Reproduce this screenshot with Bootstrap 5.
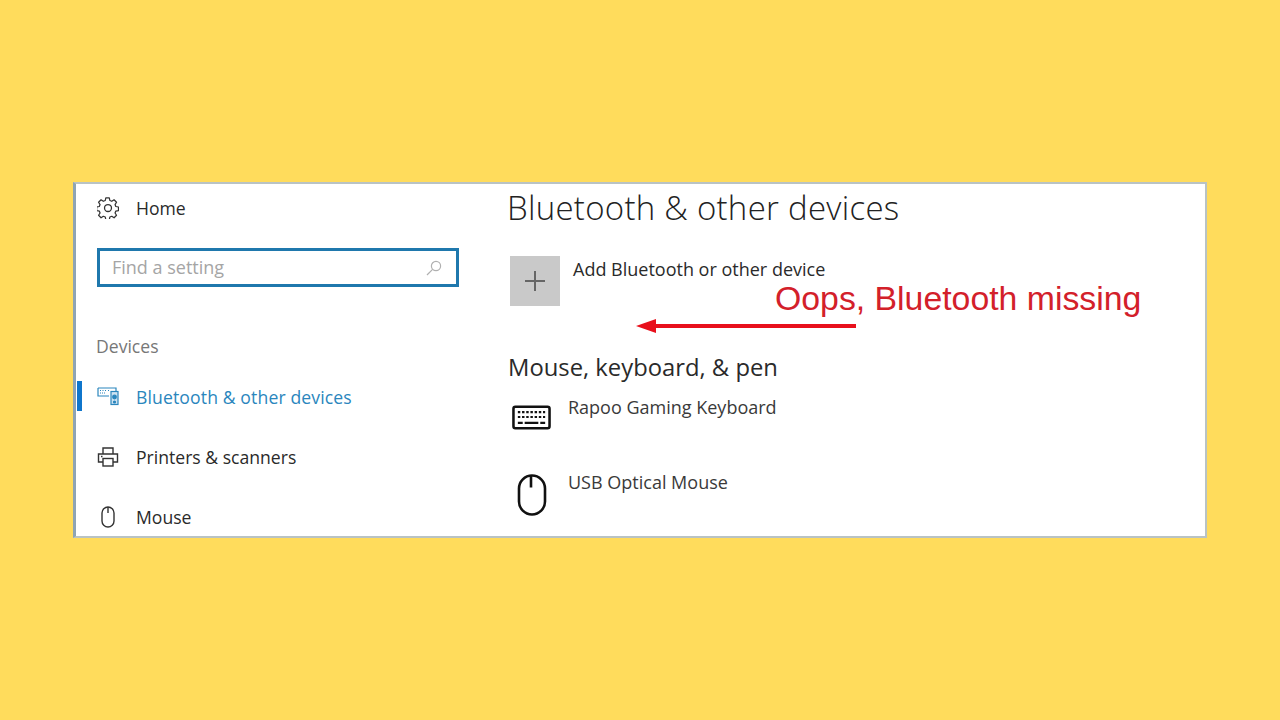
<!DOCTYPE html>
<html lang="en">
<head>
<meta charset="utf-8">
<title>Bluetooth & other devices</title>
<link href="https://cdn.jsdelivr.net/npm/bootstrap@5.3.0/dist/css/bootstrap.min.css" rel="stylesheet">
<style>
body{background:#ffdc5c;font-family:"Open Sans","Noto Sans",sans-serif;color:#222;margin:0}
.stage{height:720px}
.win{width:1134px;height:356px;background:#fff;border:2px solid #b9c3c4;border-left:3px solid #8ea4b4;overflow:hidden;position:relative}
.side{width:432px;flex:none;padding:0}
.home-row{height:48px;padding-left:21px;gap:17px;font-size:17.6px;color:#2a2a2a}
.ico{width:22px;height:22px;flex:none}
.search-box{margin:16px 0 0 21px;width:362px;height:39px;border:3px solid #1f78ad;padding:0 14px 0 12px;font-size:18px;color:#a5a5a5}
.dev-label{margin:46px 0 0 20px;font-size:17.6px;line-height:26px;color:#777}
.nav-rows{margin-top:8px}
.nav-line{height:60px;padding-left:21px;gap:17px;font-size:17.6px;color:#2a2a2a;position:relative}
.nav-line.on{color:#2a86bd;letter-spacing:.12px}
.nav-line.on::before{content:"";position:absolute;left:1px;top:14px;width:5px;height:30px;background:#0f76cc}
.nav-line.on .ico{margin-top:-3px}
.pg-title{font-size:33px;font-weight:300;line-height:44px;margin:2px 0 0 -1px;color:#222;letter-spacing:.27px}
.add-row{margin-top:26px;margin-left:2px;gap:13px}
.plus-tile{width:50px;height:50px;background:#c9c9c9;flex:none}
.add-text{font-size:18px;line-height:26px;color:#2a2a2a}
.sec-title{font-size:23.8px;line-height:32px;margin:45px 0 11px 0;color:#2a2a2a}
.dev-row{height:75px;gap:16px;margin-left:4px}
.dev-ico{width:40px;flex:none}
.kb-ico{margin-top:11px}
.ms-ico{margin-top:5px}
.dev-text{font-size:18px;line-height:26px;color:#3a3a3a}
.callout{position:absolute;left:699px;top:95px;font-family:"Liberation Sans",sans-serif;font-size:33.8px;line-height:38px;color:#d3202a;white-space:nowrap}
.pointer{position:absolute;left:560px;top:132px}
</style>
</head>
<body>
<div class="stage d-flex align-items-center justify-content-center">
  <div class="win d-flex">
    <div class="side">
      <div class="home-row d-flex align-items-center">
        <svg class="ico" viewBox="0 0 24 24" fill="none" stroke="#333" stroke-width="1.4" stroke-linejoin="round"><circle cx="12" cy="12" r="3.800"/><path d="M10 1.500h4l.6 3 2.200.9 2.600-1.700 2.800 2.800-1.700 2.600.9 2.200 3 .6v4l-3 .6-.9 2.200 1.700 2.600-2.800 2.800-2.600-1.700-2.200.9-.6 3h-4l-.6-3-2.200-.9-2.600 1.700-2.800-2.800 1.700-2.600-.9-2.200-3-.6v-4l3-.6.9-2.200-1.700-2.600 2.800-2.800 2.600 1.700 2.200-.9z" transform="translate(0 -.5) scale(.96)"/></svg>
        <span>Home</span>
      </div>
      <div class="search-box d-flex align-items-center justify-content-between">
        <span>Find a setting</span>
        <svg width="16" height="16" viewBox="0 0 16 16" fill="none" stroke="#b0b0b0" stroke-width="1.2"><circle cx="10" cy="6" r="4.600"/><path d="M6.600 9.400 1 15"/></svg>
      </div>
      <div class="dev-label">Devices</div>
      <div class="nav-rows">
        <div class="nav-line on d-flex align-items-center">
          <svg class="ico" viewBox="0 0 22 22" fill="none" stroke="#2a86bd" stroke-width="1.200"><path d="M1 3h18v4M1 3v8h11"/><path d="M3 5.500h1M5.500 5.500h1M8 5.500h1M11 5.500h1M3 8h6" stroke-dasharray="1 1"/><rect x="14" y="6.500" width="7" height="13" fill="#cfe3f1"/><circle cx="17.500" cy="12" r="1.800" fill="#2a86bd"/><circle cx="17.500" cy="17" r="1" fill="#2a86bd"/></svg>
          <span>Bluetooth &amp; other devices</span>
        </div>
        <div class="nav-line d-flex align-items-center">
          <svg class="ico" viewBox="0 0 22 22" fill="none" stroke="#333" stroke-width="1.400"><path d="M6 8V2h10v6"/><path d="M6 16H1.500V8h19v8H16"/><rect x="6" y="12.500" width="10" height="7.500"/><path d="M4 10.500h1.500"/></svg>
          <span>Printers &amp; scanners</span>
        </div>
        <div class="nav-line d-flex align-items-center">
          <svg class="ico" viewBox="0 0 22 22" fill="none" stroke="#333" stroke-width="1.400"><rect x="5" y="1" width="12" height="20" rx="6"/><path d="M11 1v6"/></svg>
          <span>Mouse</span>
        </div>
      </div>
    </div>
    <div class="flex-grow-1">
      <h1 class="pg-title">Bluetooth &amp; other devices</h1>
      <div class="add-row d-flex align-items-start">
        <div class="plus-tile d-flex align-items-center justify-content-center">
          <svg width="22" height="22" viewBox="0 0 22 22" stroke="#666" stroke-width="2"><path d="M11 1v20M1 11h20"/></svg>
        </div>
        <div class="add-text">Add Bluetooth or other device</div>
      </div>
      <h2 class="sec-title fw-normal">Mouse, keyboard, &amp; pen</h2>
      <div class="dev-row d-flex align-items-start">
        <div class="dev-ico">
          <svg class="d-block kb-ico" width="39" height="26" viewBox="0 0 40 26" fill="none"><rect x="1.500" y="1.500" width="37" height="22" rx="2" stroke="#111" stroke-width="2.600"/><path d="M6 7h28M6 12h28" stroke="#111" stroke-width="2.200" stroke-dasharray="2.500 1.800"/><path d="M6 18h5M13 18h14M29 18h5" stroke="#111" stroke-width="2.200"/></svg>
        </div>
        <div class="dev-text">Rapoo Gaming Keyboard</div>
      </div>
      <div class="dev-row d-flex align-items-start">
        <div class="dev-ico d-flex justify-content-center">
          <svg class="d-block ms-ico" width="30" height="42" viewBox="0 0 30 42" fill="none" stroke="#111" stroke-width="2.600"><rect x="2" y="1.500" width="26" height="39" rx="13"/><path d="M14 1.500v12"/></svg>
        </div>
        <div class="dev-text">USB Optical Mouse</div>
      </div>
    </div>
    <div class="callout">Oops, Bluetooth missing</div>
    <svg class="pointer" width="222" height="20" viewBox="0 0 222 20"><path d="M0 10 20 3v5h200v4H20v5z" fill="#e8101c"/></svg>
  </div>
</div>
<script src="https://cdn.jsdelivr.net/npm/bootstrap@5.3.0/dist/js/bootstrap.bundle.min.js"></script>
</body>
</html>
